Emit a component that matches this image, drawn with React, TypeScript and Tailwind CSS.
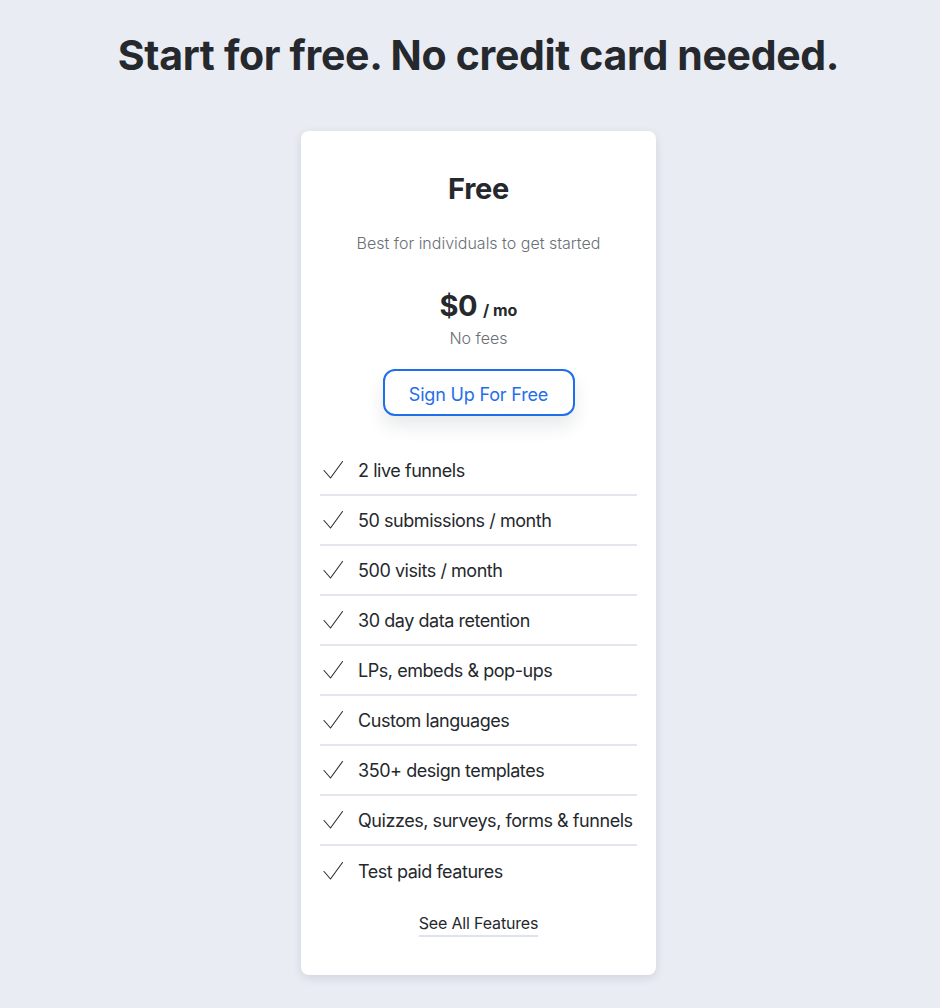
import React from 'react';

const features = [
  '2 live funnels',
  '50 submissions / month',
  '500 visits / month',
  '30 day data retention',
  'LPs, embeds & pop-ups',
  'Custom languages',
  '350+ design templates',
  'Quizzes, surveys, forms & funnels',
  'Test paid features',
];

function Check() {
  return (
    <svg width="22" height="20" viewBox="0 0 22 20" fill="none" className="shrink-0">
      <path d="M2 10.5 L8.5 18 L20.5 1.5" stroke="#2b2e33" strokeWidth="1.1" strokeLinecap="round" strokeLinejoin="round" />
    </svg>
  );
}

export default function App() {
  return (
    <div className="min-h-[1008px] bg-[#e9ecf3] pl-[17px] pt-[28px] text-[#25282d]" style={{ fontFamily: 'Inter, "Noto Sans", sans-serif' }}>
      <h1 className="text-center text-[41px] font-bold leading-[54px] tracking-[-0.008em]">
        Start for free. No credit card needed.
      </h1>

      <div className="mx-auto mt-[49px] w-[355px] rounded-lg bg-white px-[19px] pb-[38px] pt-[39px] shadow-[0_3px_10px_rgba(30,40,60,0.12)]">
        <h2 className="text-center text-[29px] font-bold leading-[37px] tracking-[-0.01em]">Free</h2>
        <p className="mt-[26px] text-center text-[16px] font-light leading-[20px] text-[#6b6f76]">
          Best for individuals to get started
        </p>

        <div className="mt-[35px] flex items-baseline justify-center gap-[6px]">
          <span className="text-[29px] font-bold leading-[36px] tracking-[-0.02em]">$0</span>
          <span className="text-[16px] font-bold">/ mo</span>
        </div>
        <p className="mt-[3px] text-center text-[16px] font-light leading-[22px] text-[#6b6f76]">No fees</p>

        <div className="mt-[20px] flex justify-center">
          <button className="h-[47px] w-[192px] rounded-xl border-2 border-[#1f6feb] bg-white pt-[3px] text-[18px] tracking-[-0.01em] text-[#1f6feb] shadow-[0_10px_18px_rgba(30,40,60,0.10)]">
            Sign Up For Free
          </button>
        </div>

        <ul className="mt-[30px]">
          {features.map((f, i) => (
            <li
              key={f}
              className={
                'flex h-[50px] items-center gap-[14px] pl-[2px] text-[18px] tracking-[-0.025em] whitespace-nowrap ' +
                (i < features.length - 1 ? 'border-b-2 border-[#e3e6ef]' : '')
              }
            >
              <Check />
              <span>{f}</span>
            </li>
          ))}
        </ul>

        <div className="mt-[16px] flex justify-center">
          <a className="border-b-2 border-[#dfe3ee] pb-[1px] text-[16px] leading-[22px] tracking-[-0.01em] text-[#25282d]">
            See All Features
          </a>
        </div>
      </div>
    </div>
  );
}
